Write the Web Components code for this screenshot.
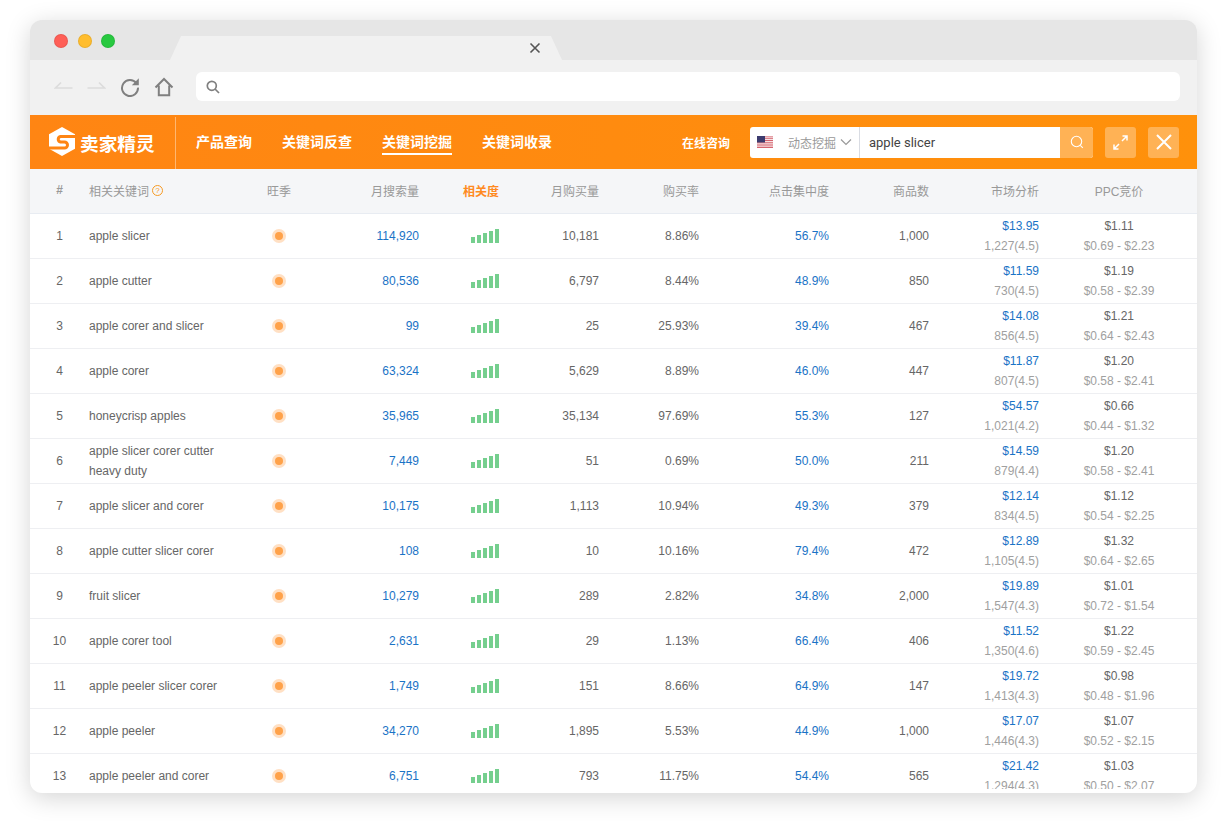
<!DOCTYPE html>
<html lang="zh">
<head>
<meta charset="utf-8">
<title>卖家精灵</title>
<style>
    html, body { margin: 0; background: #fff; }
    body { padding: 20px 33px 28px 30px; height: 821px; box-sizing: border-box; overflow: hidden; }
</style>
</head>
<body>
<browser-window>
    <browser-chrome></browser-chrome>
    <app-header></app-header>
    <keyword-table></keyword-table>
</browser-window>

<script>
const FONT = `"Liberation Sans", "Noto Sans CJK SC", sans-serif`;

class BrowserWindow extends HTMLElement {
    constructor() {
    super();
    this.attachShadow({ mode: "open" });
    this.shadowRoot.innerHTML = `
        <style>
        :host {
            display: flex;
            flex-direction: column;
            height: 773px;
            border-radius: 12px;
            overflow: hidden;
            background: #fff;
            box-shadow: 0 5px 24px rgba(0, 0, 0, .17);
            font-family: ${FONT};
        }
        </style>
        <slot></slot>
    `;
    }
}

class BrowserChrome extends HTMLElement {
    constructor() {
    super();
    this.attachShadow({ mode: "open" });
    this.shadowRoot.innerHTML = `
        <style>
        :host { display: block; flex: none; background: #f1f1f1; }
        .strip { display: flex; height: 40px; background: #e6e6e6; padding-left: 24px; box-sizing: border-box; }
        .lights { display: flex; gap: 9.5px; padding-top: 14px; width: 116px; }
        .lights i { width: 14px; height: 14px; border-radius: 50%; box-sizing: border-box; border: 1px solid rgba(0,0,0,.08); }
        .tab {
            margin-top: 16px;
            width: 392px;
            height: 24px;
            background: #f1f1f1;
            clip-path: polygon(11px 0, 381px 0, 392px 100%, 0 100%);
            display: flex;
            align-items: center;
            justify-content: flex-end;
            padding-right: 21px;
            box-sizing: border-box;
        }
        .bar { display: flex; align-items: center; height: 55px; padding: 0 17px 2px 24px; box-sizing: border-box; }
        .bar svg { display: block; flex: none; }
        .nav { display: flex; gap: 14px; width: 142px; align-items: center; }
        .address {
            flex: 1;
            height: 29px;
            border-radius: 6px;
            background: #fff;
            display: flex;
            align-items: center;
            padding-left: 10px;
        }
        </style>
        <div class="strip">
            <div class="lights">
                <i style="background:#ff5f57"></i>
                <i style="background:#ffbd2e"></i>
                <i style="background:#28c940"></i>
            </div>
            <div class="tab">
                <svg width="12" height="12" viewBox="0 0 12 12"><path d="M1.5 1.5l9 9M10.5 1.5l-9 9" stroke="#555" stroke-width="1.6" fill="none"/></svg>
            </div>
        </div>
        <div class="bar">
            <div class="nav">
                <svg width="19" height="12" viewBox="0 0 19 12"><path d="M7 1.500L1.500 7H18.500" stroke="#dcdcdc" stroke-width="1.700" fill="none"/></svg>
                <svg width="19" height="12" viewBox="0 0 19 12"><path d="M12 1.500L17.500 7H.5" stroke="#dcdcdc" stroke-width="1.700" fill="none"/></svg>
                <svg width="20" height="20" viewBox="0 0 20 20"><path d="M16.400 6.200A8 8 0 1 0 18 10.600" stroke="#808080" stroke-width="2" fill="none"/><path d="M18.800 1.200v7h-7z" fill="#808080"/></svg>
                <svg width="20" height="20" viewBox="0 0 20 20"><path d="M1.500 10.500L10 2l8.500 8.500M4.800 8.500V18.200h10.400V8.500" stroke="#808080" stroke-width="2" fill="none"/></svg>
            </div>
            <div class="address">
                <svg width="14" height="14" viewBox="0 0 14 14"><circle cx="5.800" cy="5.800" r="4.500" stroke="#808080" stroke-width="1.700" fill="none"/><path d="M9 9l4 4" stroke="#808080" stroke-width="1.700"/></svg>
            </div>
        </div>
    `;
    }
}

class AppHeader extends HTMLElement {
    constructor() {
    super();
    this.attachShadow({ mode: "open" });
    this.links = ["产品查询", "关键词反查", "关键词挖掘", "关键词收录"];
    this.active = "关键词挖掘";
    }

    connectedCallback() {
    this.render();
    }

    render() {
    this.shadowRoot.innerHTML = `
        <style>
        :host {
            display: flex;
            flex: none;
            align-items: stretch;
            height: 54px;
            background: linear-gradient(90deg, #ff8513, #ff910b);
            color: #fff;
        }
        .logo {
            display: flex;
            align-items: center;
            gap: 5px;
            width: 146px;
            padding-left: 19px;
            box-sizing: border-box;
            border-right: 1px solid rgba(255, 255, 255, .4);
            margin-top: 2px;
            flex: none;
        }
        .logo svg { display: block; flex: none; margin-top: -3px; }
        .logo span { font-size: 18.700px; font-weight: 700; white-space: nowrap; margin-top: -1px; }
        nav { display: flex; gap: 30px; padding: 2px 0 0 20px; flex: 1; align-items: center; }
        nav a { font-size: 14px; font-weight: 700; line-height: 22px; white-space: nowrap; border-bottom: 2px solid transparent; }
        nav a.active { border-bottom-color: #fff; }
        .help { font-size: 12px; font-weight: 700; margin-right: 20px; align-self: center; }
        .search { display: flex; align-self: center; height: 31px; border-radius: 3px; overflow: hidden; background: #fff; width: 343px; flex: none; }
        .site { display: flex; align-items: center; width: 110px; padding-left: 7px; box-sizing: border-box; border-right: 1px solid #d9dce3; color: #999; font-size: 12px; flex: none; }
        .site svg { display: block; flex: none; }
        .site span { margin-left: 15px; }
        .site .chev { margin-left: 4px; }
        .query { flex: 1; color: #444; font: 13px/31px Roboto, sans-serif; padding-left: 9px; }
        .go { width: 33px; display: flex; align-items: center; justify-content: center; background: #ffb255; flex: none; }
        .tools { display: flex; gap: 12px; align-self: center; margin: 0 18px 0 12px; }
        .tools div { width: 31px; height: 31px; border-radius: 3px; background: #ffb255; display: flex; align-items: center; justify-content: center; }
        </style>
        <div class="logo">
            <svg width="26" height="29" viewBox="0 0 26 29">
                <path d="M13 0L26 7.200V21.800L13 29L0 21.800V7.200Z" fill="#fff"/>
                <path d="M26 9.500H11.500a2.800 2.800 0 0 0 0 5.500h4a3 3 0 0 1 0 6H0" stroke="#ff8513" stroke-width="3" fill="none"/>
            </svg>
            <span>卖家精灵</span>
        </div>
        <nav>
            ${this.links
            .map(
                (link) => `<a class="${link === this.active ? "active" : ""}">${link}</a>`
            )
            .join("")}
        </nav>
        <div class="help">在线咨询</div>
        <div class="search">
            <div class="site">
                <svg width="16" height="12" viewBox="0 0 16 12">
                    <rect width="16" height="12" fill="#fff"/>
                    <path d="M0 .9h16M0 2.700h16M0 4.500h16M0 6.300h16M0 8.100h16M0 9.900h16M0 11.500h16" stroke="#d0525f" stroke-width=".9"/>
                    <rect width="8" height="6.500" fill="#3c3b6e"/>
                </svg>
                <span>动态挖掘</span>
                <svg class="chev" width="12" height="8" viewBox="0 0 12 8"><path d="M1 1.500l5 5 5-5" stroke="#999" stroke-width="1.200" fill="none"/></svg>
            </div>
            <div class="query">apple slicer</div>
            <div class="go">
                <svg width="14" height="14" viewBox="0 0 14 14"><circle cx="6.500" cy="6.500" r="5.200" stroke="#fff" stroke-width="1.100" fill="none"/><path d="M10.300 10.300l2.500 2.500" stroke="#fff" stroke-width="1.100"/></svg>
            </div>
        </div>
        <div class="tools">
            <div><svg width="15" height="15" viewBox="0 0 15 15"><path d="M9 6l5-5M9.500 1H14V5.500M6 9l-5 5M1 9.500V14H5.500" stroke="#fff" stroke-width="1.500" fill="none"/></svg></div>
            <div><svg width="16" height="16" viewBox="0 0 16 16"><path d="M1 1l14 14M15 1L1 15" stroke="#fff" stroke-width="2" fill="none"/></svg></div>
        </div>
    `;
    }
}

const COLUMNS = "grid-template-columns: 59px 160px 60px 110px 80px 100px 100px 130px 100px 110px 158px;";

class KeywordRow extends HTMLElement {
    constructor() {
    super();
    this.attachShadow({ mode: "open" });
    }

    connectedCallback() {
    this.render();
    }

    render() {
    const d = this.data;
    this.shadowRoot.innerHTML = `
        <style>
        :host {
            display: grid;
            ${COLUMNS}
            align-items: center;
            height: 45px;
            flex: none;
            box-sizing: border-box;
            border-bottom: 1px solid #eeeff2;
            font-size: 12px;
            line-height: 20px;
            color: #666;
        }
        .c { text-align: center; }
        .r { text-align: right; }
        .kw { padding-right: 20px; }
        .ppc { padding-left: 2px; }
        .blue { color: #1a73c6; }
        .sub { color: #a0a0a0; }
        .dot { width: 14px; height: 14px; border-radius: 50%; background: #ffe0c4; margin: 0 auto; display: flex; align-items: center; justify-content: center; }
        .dot i { width: 8px; height: 8px; border-radius: 50%; background: #ffa24a; }
        .bars { display: flex; gap: 2px; justify-content: flex-end; align-items: flex-end; height: 14px; }
        .bars i { width: 4px; background: #75cf8e; }
        </style>
        <div class="c">${d.n}</div>
        <div class="kw">${d.kw}</div>
        <div><div class="dot"><i></i></div></div>
        <div class="r blue">${d.search}</div>
        <div class="bars">
            ${[6, 8, 10, 12, 14].map((h) => `<i style="height:${h}px"></i>`).join("")}
        </div>
        <div class="r">${d.buys}</div>
        <div class="r">${d.rate}</div>
        <div class="r blue">${d.click}</div>
        <div class="r">${d.goods}</div>
        <div class="r"><div class="blue">${d.price}</div><div class="sub">${d.reviews}</div></div>
        <div class="c ppc"><div>${d.ppc}</div><div class="sub">${d.range}</div></div>
    `;
    }
}

const ROWS = [
    ["apple slicer", "114,920", "10,181", "8.86%", "56.7%", "1,000", "$13.95", "1,227(4.5)", "$1.11", "$0.69 - $2.23"],
    ["apple cutter", "80,536", "6,797", "8.44%", "48.9%", "850", "$11.59", "730(4.5)", "$1.19", "$0.58 - $2.39"],
    ["apple corer and slicer", "99", "25", "25.93%", "39.4%", "467", "$14.08", "856(4.5)", "$1.21", "$0.64 - $2.43"],
    ["apple corer", "63,324", "5,629", "8.89%", "46.0%", "447", "$11.87", "807(4.5)", "$1.20", "$0.58 - $2.41"],
    ["honeycrisp apples", "35,965", "35,134", "97.69%", "55.3%", "127", "$54.57", "1,021(4.2)", "$0.66", "$0.44 - $1.32"],
    ["apple slicer corer cutter heavy duty", "7,449", "51", "0.69%", "50.0%", "211", "$14.59", "879(4.4)", "$1.20", "$0.58 - $2.41"],
    ["apple slicer and corer", "10,175", "1,113", "10.94%", "49.3%", "379", "$12.14", "834(4.5)", "$1.12", "$0.54 - $2.25"],
    ["apple cutter slicer corer", "108", "10", "10.16%", "79.4%", "472", "$12.89", "1,105(4.5)", "$1.32", "$0.64 - $2.65"],
    ["fruit slicer", "10,279", "289", "2.82%", "34.8%", "2,000", "$19.89", "1,547(4.3)", "$1.01", "$0.72 - $1.54"],
    ["apple corer tool", "2,631", "29", "1.13%", "66.4%", "406", "$11.52", "1,350(4.6)", "$1.22", "$0.59 - $2.45"],
    ["apple peeler slicer corer", "1,749", "151", "8.66%", "64.9%", "147", "$19.72", "1,413(4.3)", "$0.98", "$0.48 - $1.96"],
    ["apple peeler", "34,270", "1,895", "5.53%", "44.9%", "1,000", "$17.07", "1,446(4.3)", "$1.07", "$0.52 - $2.15"],
    ["apple peeler and corer", "6,751", "793", "11.75%", "54.4%", "565", "$21.42", "1,294(4.3)", "$1.03", "$0.50 - $2.07"],
];

class KeywordTable extends HTMLElement {
    constructor() {
    super();
    this.attachShadow({ mode: "open" });
    }

    connectedCallback() {
    this.shadowRoot.innerHTML = `
        <style>
        :host { display: flex; flex-direction: column; flex: 1; min-height: 0; overflow: hidden; margin-bottom: 4px; }
        .head {
            display: grid;
            ${COLUMNS}
            align-items: center;
            flex: none;
            height: 45px;
            padding-bottom: 2px;
            box-sizing: border-box;
            background: #f5f6f8;
            border-bottom: 1px solid #e8ecf2;
            font-size: 12px;
            font-weight: 400;
            color: #999;
        }
        .c { text-align: center; }
        .r { text-align: right; }
        .kw { display: flex; align-items: center; gap: 3px; }
        .num { font-weight: 700; }
        .ppc { padding-left: 2px; }
        .q {
            width: 9px; height: 9px; border: 1px solid #f59a23; border-radius: 50%;
            font-size: 8px; line-height: 9px; text-align: center; color: #f59a23;
        }
        .hot { color: #ff8a1f; font-weight: 700; }
        </style>
        <div class="head">
            <div class="c num">#</div>
            <div class="kw">相关关键词 <span class="q">?</span></div>
            <div class="c">旺季</div>
            <div class="r">月搜索量</div>
            <div class="r hot">相关度</div>
            <div class="r">月购买量</div>
            <div class="r">购买率</div>
            <div class="r">点击集中度</div>
            <div class="r">商品数</div>
            <div class="r">市场分析</div>
            <div class="c ppc">PPC竞价</div>
        </div>
    `;
    ROWS.forEach((r, i) => {
        const row = document.createElement("keyword-row");
        row.data = {
            n: i + 1, kw: r[0], search: r[1], buys: r[2], rate: r[3], click: r[4],
            goods: r[5], price: r[6], reviews: r[7], ppc: r[8], range: r[9],
        };
        this.shadowRoot.appendChild(row);
    });
    }
}

customElements.define("browser-window", BrowserWindow);
customElements.define("browser-chrome", BrowserChrome);
customElements.define("app-header", AppHeader);
customElements.define("keyword-row", KeywordRow);
customElements.define("keyword-table", KeywordTable);
</script>
</body>
</html>
